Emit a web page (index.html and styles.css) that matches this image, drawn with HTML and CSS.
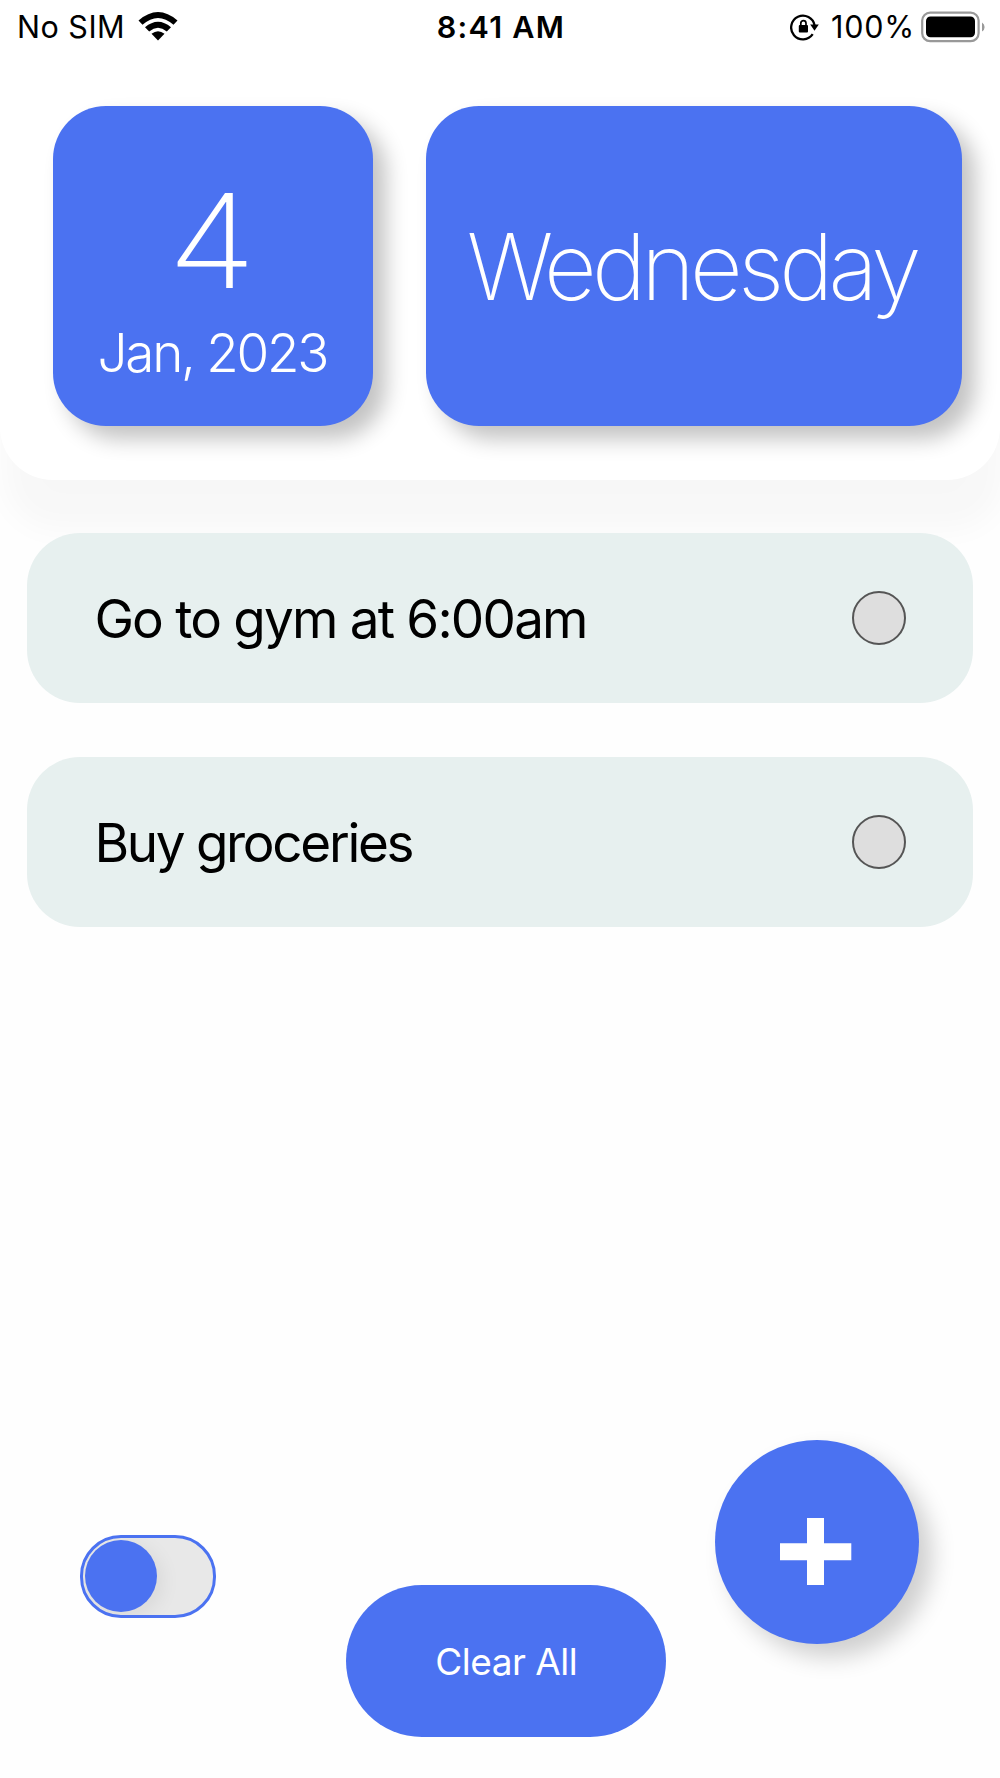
FILE: index.html
```
<!DOCTYPE html>
<html lang="en">
<head>
  <meta charset="utf-8">
  <title>To Do</title>
  <link rel="stylesheet" href="styles.css">
</head>
<body>
  <div id="screen">
    <div class="header">
      <div class="status">
        <div class="status-left">
          <span class="carrier">No SIM</span>
          <svg class="wifi" width="40" height="30" viewBox="0 0 40 30">
            <path d="M0.5 8.5 Q20 -8.5 39.5 8.5 L35.5 12.8 Q20 -1 4.5 12.8 Z"/>
            <path d="M7 15.2 Q20 4.2 33 15.2 L28.8 19.4 Q20 12 11.2 19.4 Z"/>
            <path d="M13.5 21.8 Q20 16.6 26.5 21.8 L20 28.5 Z"/>
          </svg>
        </div>
        <div class="time">8:41 AM</div>
        <div class="status-right">
          <svg class="lock" width="30" height="28" viewBox="0 0 30 28">
            <path d="M22.7 21.2 A11.8 11.8 0 1 1 24.6 12.5" fill="none" stroke="#000" stroke-width="2.3"/>
            <path d="M20.2 11.6 H28.8 L24.5 17.8 Z"/>
            <rect x="8.8" y="12" width="9.2" height="7.4" rx="1"/>
            <path d="M10.8 13 V10.2 A2.6 2.6 0 0 1 16 10.2 V13" fill="none" stroke="#000" stroke-width="1.7"/>
          </svg>
          <span class="percent">100%</span>
          <svg class="battery" width="64" height="32" viewBox="0 0 64 32">
            <rect x="1.2" y="1.6" width="56.4" height="28.6" rx="8" fill="none" stroke="#999" stroke-width="2.2"/>
            <rect x="5" y="5.5" width="49" height="20.8" rx="4.5"/>
            <path d="M61 11.5 Q63.6 13 63.6 16 Q63.6 19 61 20.5 Z" fill="#999"/>
          </svg>
        </div>
      </div>
      <div class="cards">
        <div class="card date">
          <div class="num">4</div>
          <div class="month">Jan, 2023</div>
        </div>
        <div class="card day"><span>Wednesday</span></div>
      </div>
    </div>

    <div class="tasks">
      <div class="task"><span class="gym">Go to gym at 6:00am</span><div class="check"></div></div>
      <div class="task"><span class="buy">Buy groceries</span><div class="check"></div></div>
    </div>

    <div class="footer">
      <div class="toggle"><div class="knob"></div></div>
      <div class="clear"><span>Clear All</span></div>
      <div class="add">
        <svg width="72" height="68" viewBox="0 0 72 68">
          <path d="M27 0 H44 V25.3 H71.3 V42.3 H44 V67 H27 V42.3 H0 V25.3 H27 Z" fill="#fff"/>
        </svg>
      </div>
    </div>
  </div>
</body>
</html>
```
FILE: styles.css
```
* {
  box-sizing: border-box;
}
body {
  background-color: #FEFEFE;
  font-family: Inter, "Liberation Sans", sans-serif;
  margin: 0;
}
#screen {
  display: flex;
  flex-direction: column;
  height: 1778px;
  overflow: hidden;
  width: 1000px;
}
.header {
  background-color: #FFFFFF;
  border-radius: 0 0 53px 53px;
  box-shadow: 4px 50px 30px rgba(0,0,0,.027);
  height: 479.5px;
}
.status {
  align-items: center;
  display: grid;
  font-size: 30.5px;
  grid-template-columns: 1fr auto 1fr;
  height: 54px;
  line-height: 36px;
  padding: 0 15px 0 17px;
}
.status-left {
  align-items: center;
  display: flex;
  gap: 12.5px;
  letter-spacing: .5px;
}
.status-right {
  align-items: center;
  display: flex;
  justify-content: flex-end;
}
.time {
  font-weight: 600;
  letter-spacing: 1.3px;
}
.lock {
  margin-right: 11px;
}
.percent {
  letter-spacing: .8px;
}
.battery {
  margin-left: 6px;
}
.cards {
  display: flex;
  gap: 53px;
  padding: 52px 37.7px 0 53.3px;
}
.card {
  background-color: #4B72F1;
  border-radius: 53px;
  box-shadow: 13px 13px 21px rgba(0,0,0,.24);
  color: #FFFFFF;
  height: 320px;
}
.date {
  padding-top: 55px;
  text-align: center;
  width: 320px;
}
.num {
  font-size: 130px;
  font-weight: 200;
  line-height: 160px;
  padding-right: 2px;
  transform: scaleX(1.11);
}
.month {
  font-size: 53px;
  font-weight: 300;
  letter-spacing: -2.3px;
  line-height: 64px;
  padding-right: 2px;
}
.day {
  align-items: center;
  display: flex;
  flex: 1;
  font-size: 91.5px;
  font-weight: 200;
  justify-content: center;
  letter-spacing: -4.8px;
}
.day span {
  margin-right: 5px;
}
.tasks {
  display: flex;
  flex: 1;
  flex-direction: column;
  gap: 53.4px;
  padding: 53.5px 26.7px 0;
}
.task {
  align-items: center;
  background-color: #E7F0EF;
  border-radius: 53px;
  display: flex;
  font-size: 53px;
  height: 170.4px;
  justify-content: space-between;
  padding: 0 67.7px;
}
.task span {
  padding-top: 2px;
}
.gym {
  letter-spacing: -1.8px;
}
.buy {
  letter-spacing: -2.3px;
}
.check {
  background-color: #DEDEDE;
  border: 2px solid #555555;
  border-radius: 50%;
  height: 54px;
  width: 54px;
}
.footer {
  align-items: flex-start;
  display: flex;
  height: 338px;
  padding: 0 80px;
}
.toggle {
  background-color: #E8E8E8;
  border: 3px solid #4B72F1;
  border-radius: 41px;
  height: 82.5px;
  margin-top: 95px;
  overflow: hidden;
  padding: 2.3px;
  width: 135.5px;
}
.knob {
  background-color: #4B72F1;
  border-radius: 50%;
  box-shadow: 5px 5px 20px rgba(0,0,0,.07);
  height: 72px;
  width: 72px;
}
.clear {
  align-items: center;
  background-color: #4B72F1;
  border-radius: 76px;
  color: #FFFFFF;
  display: flex;
  font-size: 37px;
  height: 152px;
  justify-content: center;
  letter-spacing: -.5px;
  margin: 145.4px 49.2px 0 130.8px;
  width: 320px;
}
.add {
  background-color: #4B72F1;
  border-radius: 50%;
  box-shadow: 13px 13px 23px rgba(0,0,0,.19);
  height: 204px;
  padding: 77.5px 0 0 65px;
  width: 204px;
}
```
